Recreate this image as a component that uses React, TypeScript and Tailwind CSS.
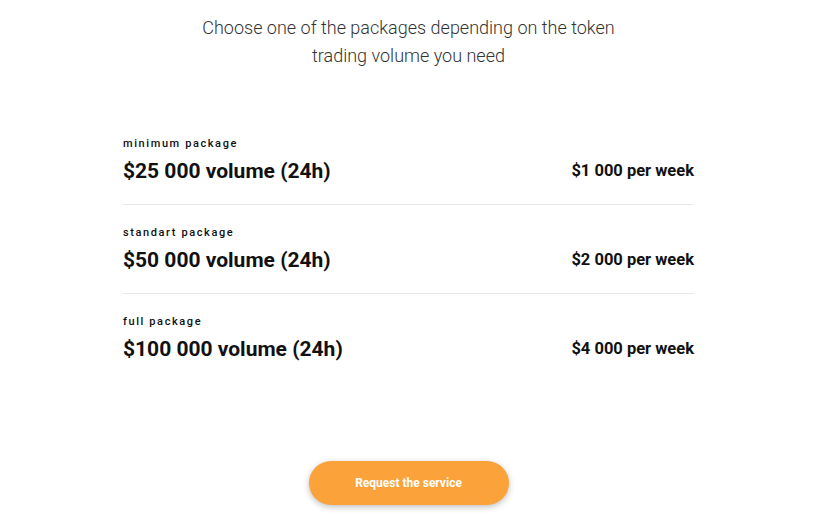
import React from "react";

interface Pack {
  label: string;
  volume: string;
  price: string;
}

const packs: Pack[] = [
  { label: "minimum package", volume: "$25 000 volume (24h)", price: "$1 000 per week" },
  { label: "standart package", volume: "$50 000 volume (24h)", price: "$2 000 per week" },
  { label: "full package", volume: "$100 000 volume (24h)", price: "$4 000 per week" },
];

export default function App() {
  return (
    <div className="w-[834px] h-[519px] bg-white overflow-hidden font-['Roboto',sans-serif]">
      <div className="w-[817px] flex flex-col items-center pt-[14px]">
        <h2 className="text-[18px] leading-[28px] font-light text-[#333] text-center w-[440px]">
          Choose one of the packages depending on the token trading volume you need
        </h2>

        <div className="w-[571px] mt-[46px]">
          {packs.map((p, i) => (
            <div
              key={p.label}
              className={`flex items-center justify-between pt-[20px] pb-[19px] ${
                i < packs.length - 1 ? "border-b border-[#e8e8e8]" : ""
              }`}
            >
              <div>
                {/* small label */}
                <div className="text-[11px] leading-[16px] font-medium tracking-[1.6px] text-[#111]">
                  {p.label}
                </div>
                <div className="mt-[5px] text-[21px] leading-[28px] font-bold text-[#111]">
                  {p.volume}
                </div>
              </div>
              <div className="self-end h-[28px] flex items-center text-[16.5px] font-bold text-[#111]">
                {p.price}
              </div>
            </div>
          ))}
        </div>

        <button className="mt-[79px] w-[200px] h-[44px] rounded-full bg-[#fba23a] text-white text-[12px] font-bold shadow-[0_2px_6px_rgba(0,0,0,0.25)]">
          Request the service
        </button>
      </div>
    </div>
  );
}
